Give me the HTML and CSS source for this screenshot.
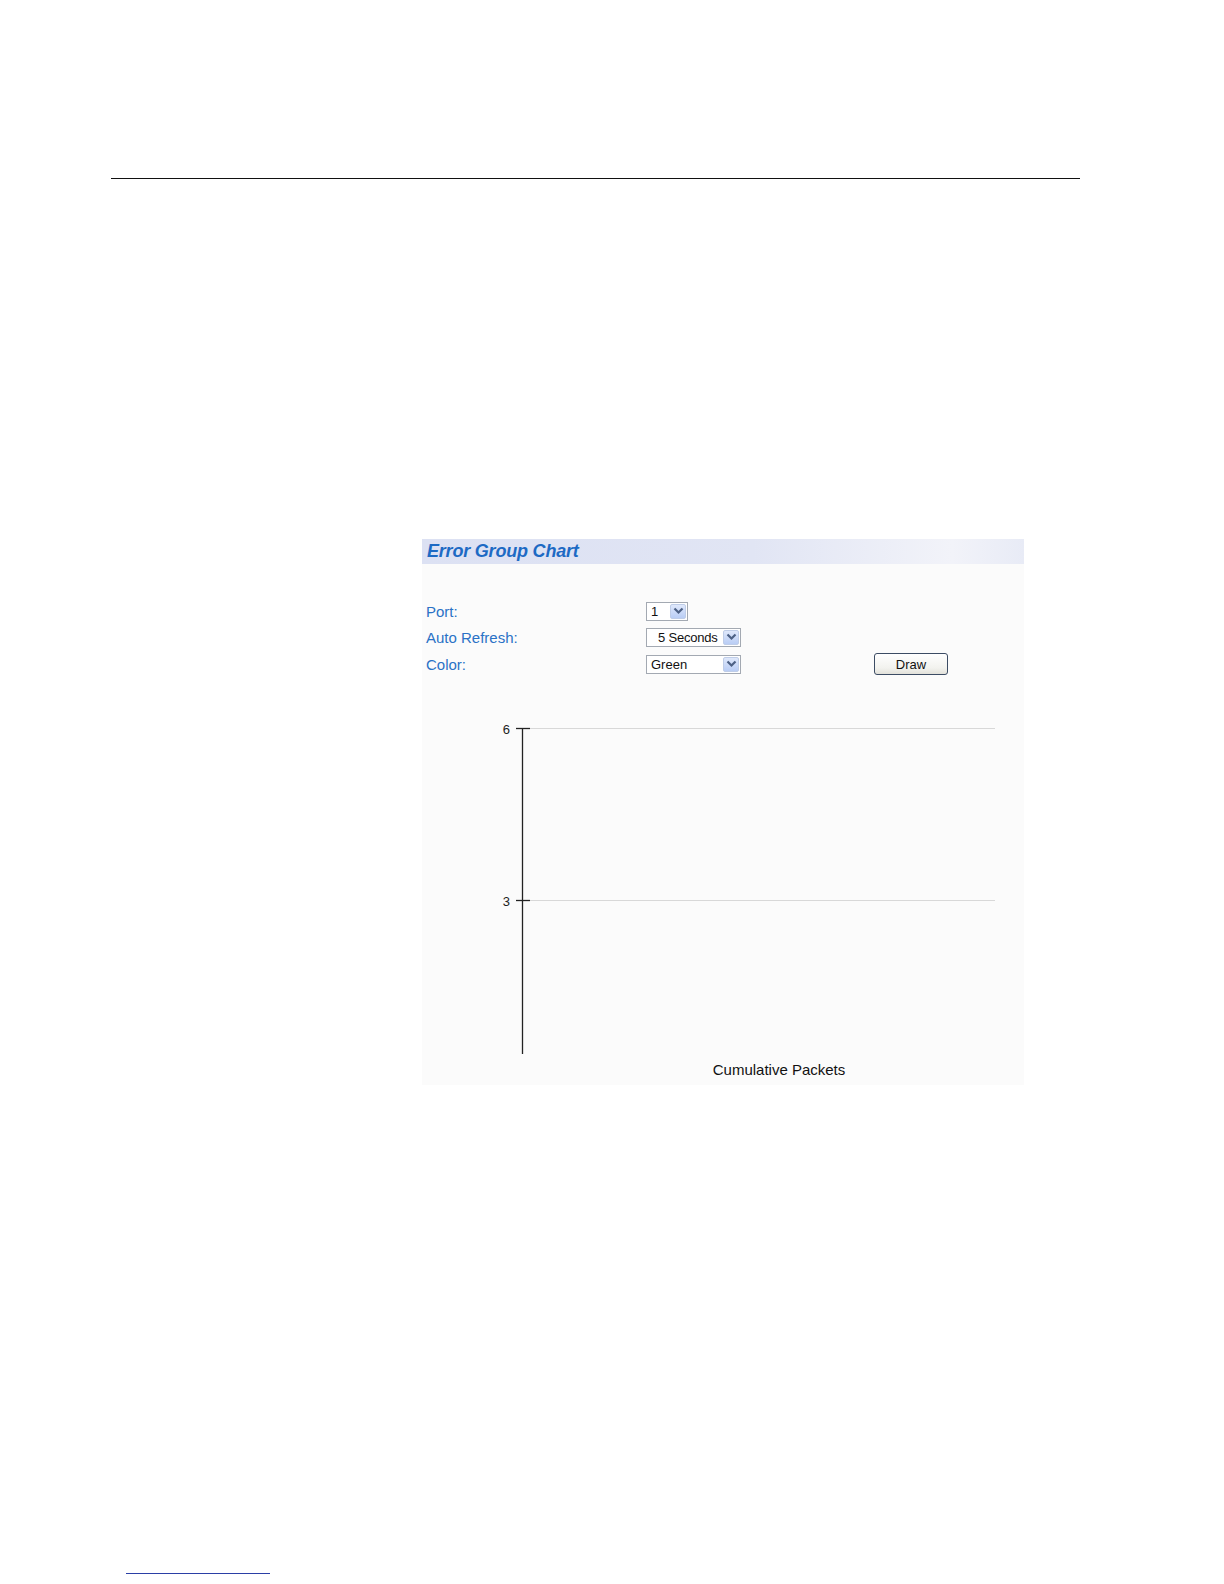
FILE: index.html
```html
<!DOCTYPE html>
<html>
<head>
<meta charset="utf-8">
<title>Error Group Chart</title>
<link rel="stylesheet" href="styles.css">
</head>
<body>
<div class="page">
  <hr class="top-rule">
  <div class="panel">
    <div class="panel-header"><span class="panel-title">Error Group Chart</span></div>
    <div class="form">
      <div class="row row-port">
        <span class="label">Port:</span>
        <div class="select sel-port"><span class="sel-text">1</span><span class="arrow"><svg width="11" height="8" viewBox="0 0 11 8"><path d="M1.5 1.5 L5.5 5.5 L9.5 1.5" fill="none" stroke="#4d6185" stroke-width="2.2"/></svg></span></div>
      </div>
      <div class="row row-refresh">
        <span class="label">Auto Refresh:</span>
        <div class="select sel-wide"><span class="sel-text indent">5 Seconds</span><span class="arrow"><svg width="11" height="8" viewBox="0 0 11 8"><path d="M1.5 1.5 L5.5 5.5 L9.5 1.5" fill="none" stroke="#4d6185" stroke-width="2.2"/></svg></span></div>
      </div>
      <div class="row row-color">
        <span class="label">Color:</span>
        <div class="select sel-wide"><span class="sel-text">Green</span><span class="arrow"><svg width="11" height="8" viewBox="0 0 11 8"><path d="M1.5 1.5 L5.5 5.5 L9.5 1.5" fill="none" stroke="#4d6185" stroke-width="2.2"/></svg></span></div>
        <button class="draw-btn">Draw</button>
      </div>
    </div>
    <svg class="chart" width="602" height="386" viewBox="0 0 602 386">
      <line x1="107" y1="29.5" x2="573" y2="29.5" stroke="#d8d8d8" stroke-width="1"/>
      <line x1="107" y1="201.5" x2="573" y2="201.5" stroke="#d8d8d8" stroke-width="1"/>
      <line x1="100.5" y1="29" x2="100.5" y2="355" stroke="#222" stroke-width="1.3"/>
      <line x1="94" y1="29.5" x2="108" y2="29.5" stroke="#222" stroke-width="1.3"/>
      <line x1="94" y1="201.5" x2="108" y2="201.5" stroke="#222" stroke-width="1.3"/>
      <text x="88" y="34.5" class="tick" text-anchor="end">6</text>
      <text x="88" y="206.5" class="tick" text-anchor="end">3</text>
      <text x="357" y="376" class="xlabel" text-anchor="middle">Cumulative Packets</text>
    </svg>
  </div>
  <div class="bottom-link"></div>
</div>
</body>
</html>
```

FILE: styles.css
```css
html, body {
  margin: 0;
  padding: 0;
  background: #ffffff;
}
body {
  font-family: "Liberation Sans", Arial, sans-serif;
}
.page {
  width: 1224px;
  display: flow-root;
}
.top-rule {
  margin: 178px 0 0 111px;
  width: 969px;
  height: 0;
  border: 0;
  border-top: 1.5px solid #111;
}
.panel {
  margin: 360px 0 0 422px;
  width: 602px;
  height: 546px;
  background: #fbfbfb;
}
.panel-header {
  height: 25px;
  background: linear-gradient(to right, #dce1f3 0%, #e1e5f4 55%, #f2f3f9 88%, #e8ebf6 100%);
  display: flex;
  align-items: center;
  padding-left: 5px;
}
.panel-title {
  font-size: 18px;
  font-weight: bold;
  font-style: italic;
  color: #1d6ac4;
  letter-spacing: -0.2px;
}
.form {
  padding-top: 37px;
  height: 135px;
  box-sizing: border-box;
  display: flex;
  flex-direction: column;
}
.row {
  display: flex;
  align-items: center;
  height: 20px;
}
.row-refresh { margin-top: 6px; }
.row-color { margin-top: 7px; }
.label {
  width: 224px;
  box-sizing: border-box;
  padding-left: 4px;
  font-size: 15px;
  color: #2a72c6;
}
.select {
  height: 19px;
  box-sizing: border-box;
  border: 1px solid #a3a9b2;
  background: #fff;
  display: flex;
  align-items: center;
  justify-content: space-between;
  padding: 0 1px 0 4px;
}
.sel-port { width: 42px; }
.sel-wide { width: 95px; }
.sel-text {
  font-size: 13px;
  color: #111;
}
.sel-text.indent { padding-left: 7px; letter-spacing: -0.2px; }
.arrow {
  width: 16px;
  height: 15px;
  border-radius: 2px;
  background: linear-gradient(#dfe8fb, #b9cdf5);
  border: 1px solid #bfcde8;
  box-sizing: border-box;
  display: flex;
  align-items: center;
  justify-content: center;
}
.draw-btn {
  margin-left: 133px;
  width: 74px;
  height: 22px;
  border: 1px solid #3c4c64;
  border-radius: 3px;
  background: linear-gradient(#ffffff, #f2f2ee 70%, #e2e1da);
  font-family: "Liberation Sans", Arial, sans-serif;
  font-size: 13px;
  color: #111;
  padding: 0;
}
.chart {
  display: block;
}
.tick {
  font-family: "Liberation Sans", Arial, sans-serif;
  font-size: 13px;
  fill: #222;
}
.xlabel {
  font-family: "Liberation Sans", Arial, sans-serif;
  font-size: 15px;
  fill: #111;
}
.bottom-link {
  margin: 488px 0 0 126px;
  width: 144px;
  height: 1px;
  background: #2b3fa6;
}
```
